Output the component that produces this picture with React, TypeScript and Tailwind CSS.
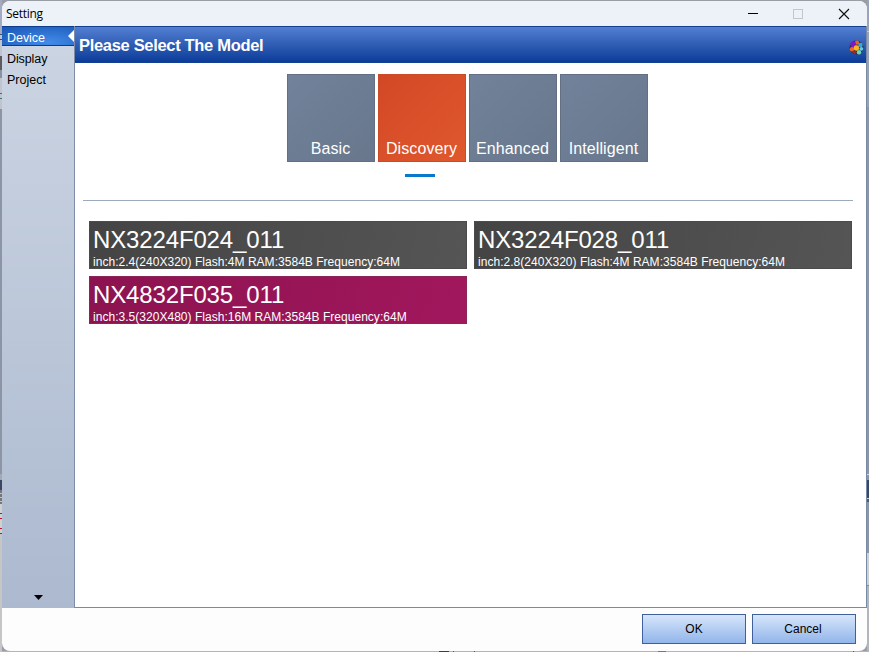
const tabs = ["Basic", "Discovery", "Enhanced", "Intelligent"];

const models = [
  { name: "NX3224F024_011", spec: "inch:2.4(240X320) Flash:4M RAM:3584B Frequency:64M" },
  { name: "NX3224F028_011", spec: "inch:2.8(240X320) Flash:4M RAM:3584B Frequency:64M" },
  { name: "NX4832F035_011", spec: "inch:3.5(320X480) Flash:16M RAM:3584B Frequency:64M" },
];

function LeftEdge() {
  return (
    <div className="flex w-[2px] shrink-0 flex-col bg-[#bfc4cf]">
      <div className="h-[34px] bg-[#a4abc0]" />
      <div className="h-px bg-[#42516a]" />
      <div className="h-[4px]" />
      <div className="h-px bg-[#42516a]" />
      <div className="h-[16px]" />
      <div className="h-[14px] bg-[#5d5a60]" />
      <div className="h-[8px] bg-[#8992a0]" />
      <div className="h-[15px]" />
      <div className="h-px bg-[#3c7776]" />
      <div className="h-[4px]" />
      <div className="h-px bg-[#3c7776]" />
      <div className="h-[10px]" />
      <div className="h-[365px] bg-[#8c95a5]" />
      <div className="h-[6px] bg-[#a2a9b5]" />
      <div className="h-[10px] bg-[#394763]" />
      <div className="h-[14px] bg-[repeating-linear-gradient(#77747c_0px_3px,#c8bfc4_3px_4px)]" />
      <div className="h-[9px] bg-[#d0d0d2]" />
      <div className="h-px bg-[#c01420]" />
      <div className="h-[4px] bg-[#d0d0d2]" />
      <div className="h-px bg-[#c01420]" />
      <div className="h-[9px] bg-[#d0d0d2]" />
      <div className="h-px bg-[#c01420]" />
      <div className="h-[4px] bg-[#d0d0d2]" />
      <div className="h-px bg-[#c01420]" />
      <div className="flex-1 bg-[#c6c6c7]" />
    </div>
  );
}

function RightEdge() {
  return (
    <div className="flex w-[2px] shrink-0 flex-col bg-[#8d96a7]">
      <div className="h-[31px] bg-[#9aa3b8]" />
      <div className="h-px bg-[#c2c8d4]" />
      <div className="h-[75px] bg-[#98a2b5]" />
      <div className="h-[367px]" />
      <div className="h-px bg-[#d4d8df]" />
      <div className="h-[5px]" />
      <div className="h-[18px] bg-[#374766]" />
      <div className="h-px bg-[#c5cbd5]" />
      <div className="h-[3px] bg-[#4d5a72]" />
      <div className="h-[51px]" />
      <div className="h-[32px] bg-[#ced0d4]" />
      <div className="h-px bg-[#858992]" />
      <div className="flex-1 bg-[#b2b5bb]" />
    </div>
  );
}

function TitleBar() {
  return (
    <div className="flex h-[25px] shrink-0 items-center bg-[#edf2f8] pl-[4px]">
      <span className="w-[37px] font-['Open_Sans','Noto_Sans',sans-serif] text-[12px] leading-[16px] tracking-[-0.3px] text-black">
        Setting
      </span>
      <div className="ml-auto flex h-full items-center">
        <div className="flex w-[45px] justify-center">
          <div className="h-px w-[10px] bg-black" />
        </div>
        <div className="mr-px flex w-[45px] justify-center">
          <div className="h-[10px] w-[10px] border border-[#c3c6ca]" />
        </div>
        <div className="flex w-[46px] justify-center">
          <svg width="12" height="12" viewBox="0 0 12 12" stroke="#111" strokeWidth="1.15">
            <path d="M1 1 L11 11 M11 1 L1 11" />
          </svg>
        </div>
      </div>
    </div>
  );
}

function SideBar() {
  return (
    <div className="flex w-[73px] shrink-0 flex-col border-r border-[#7e8da6] bg-linear-to-b from-[#ccd5e3] to-[#acb9cf] text-[12.5px] tracking-[-0.1px] text-black">
      <div className="flex h-[20px] items-center justify-between border-y border-[#0d3c8e] bg-radial-[at_65%_85%] from-[#438be9] to-[#1755b4] pl-[5px] text-white">
        <span className="pt-[3px] leading-[16px] tracking-[-0.05px]">Device</span>
        <svg width="6" height="12" viewBox="0 0 6 12" className="mb-px">
          <path d="M6 0 V12 L0 6 Z" fill="#fff" />
        </svg>
      </div>
      <span className="mt-[5px] pl-[5px] leading-[16px]">Display</span>
      <span className="mt-[5px] pl-[5px] leading-[16px] tracking-[0px]">Project</span>
      <svg width="9" height="5" viewBox="0 0 9 5" className="mt-auto mb-[8px] ml-[32px]">
        <path d="M0 0 H9 L4.5 5 Z" fill="#000" />
      </svg>
    </div>
  );
}

function ColorBall() {
  return (
    <svg width="15" height="17" viewBox="0 0 15 17">
      <circle cx="7.5" cy="8.6" r="7" fill="#26334b" />
      <circle cx="8" cy="3.6" r="2.2" fill="#e8642a" />
      <circle cx="4.2" cy="5.4" r="2.8" fill="#8316cb" />
      <circle cx="11.4" cy="6" r="2.3" fill="#37a5e4" />
      <circle cx="3" cy="10.2" r="2.2" fill="#e66b2e" />
      <circle cx="7.4" cy="9" r="2.7" fill="#ffb61d" />
      <circle cx="12.3" cy="9.8" r="1.9" fill="#67c9ec" />
      <circle cx="5.4" cy="13.3" r="1.8" fill="#a9212c" />
      <circle cx="10" cy="13.3" r="2.2" fill="#75d4ab" />
    </svg>
  );
}

function ModelPanel() {
  return (
    <div className="flex min-w-0 flex-1 flex-col border-r border-b border-[#798aa6] bg-white">
      <div className="flex h-[37px] shrink-0 items-center justify-between border-y border-[#123f91] bg-linear-to-b from-[#527fd1] to-[#0a3c99] pr-[2px] pl-[4px] text-white">
        <h1 className="text-[16.5px] leading-[20px] font-bold tracking-[-0.32px] whitespace-nowrap">
          Please Select The Model
        </h1>
        <div className="pt-[6px]"><ColorBall /></div>
      </div>
      <div className="mt-[11px] ml-[212px] flex gap-[3px]">
        {tabs.map((tab) => (
          <button
            key={tab}
            className={`flex h-[88px] w-[88px] items-end justify-center border pr-px pb-[3px] text-[16px] leading-[18px] tracking-[0.1px] text-white ${
              tab === "Discovery"
                ? "border-[#c94b27] bg-linear-to-br from-[#d24826] to-[#e0582d]"
                : "border-[#637083] bg-linear-to-br from-[#71829a] to-[#68778c]"
            }`}
          >
            {tab}
          </button>
        ))}
      </div>
      <div className="mt-[12px] ml-[330px] h-[3px] w-[30px] bg-[#087acb]" />
      <div className="mr-[13px] ml-[8px] h-[24px] border-b border-[#9babbd]" />
      <div className="mt-[20px] ml-[14px] grid w-[763px] grid-cols-2 gap-[7px]">
        {models.map((model, index) => (
          <button
            key={model.name}
            className={`flex h-[48px] flex-col items-start border pl-[3px] text-left text-white ${
              index === 2
                ? "border-[#8b2459] bg-linear-100 from-[#8c1350] to-[#a2175d]"
                : "border-[#4b4b4b] bg-linear-100 from-[#444444] to-[#555555]"
            }`}
          >
            <span className="mt-[5px] text-[24px] leading-[26px] tracking-[-0.14px]">{model.name}</span>
            <span className="mt-[2px] text-[12px] leading-[15px] tracking-[0.03px] whitespace-nowrap">
              {model.spec}
            </span>
          </button>
        ))}
      </div>
    </div>
  );
}

export default function App() {
  return (
    <div className="flex h-[652px] w-[869px] overflow-hidden bg-[#9fa3aa] font-['Liberation_Sans',Arial,sans-serif]">
      <LeftEdge />
      <div className="flex h-[652px] w-[865px] flex-col bg-[#999da5] pt-px">
        <div className="flex h-[650px] flex-col overflow-hidden rounded-[8px] bg-[#fdfdfd]">
          <TitleBar />
          <div className="flex h-[582px] shrink-0">
            <SideBar />
            <ModelPanel />
          </div>
          <div className="flex h-[42px] items-center justify-end gap-[6px] pr-[11px] text-[12px] text-black">
            <button className="h-[30px] w-[104px] border border-[#40609c] bg-linear-to-b from-[#d6e6fa] to-[#92b5ea]">
              OK
            </button>
            <button className="h-[30px] w-[104px] border border-[#40609c] bg-linear-to-b from-[#d6e6fa] to-[#92b5ea] pr-[2px]">
              Cancel
            </button>
          </div>
        </div>
        <div className="flex h-px bg-[#b7b3b3]">
          <div className="ml-[437px] h-px w-[10px] bg-[#343e50]" />
          <div className="ml-[4px] h-px w-px bg-[#555]" />
          <div className="ml-[20px] h-px w-px bg-[#555]" />
          <div className="ml-[183px] h-px w-[8px] bg-[#777]" />
          <div className="ml-[187px] h-px w-px bg-[#555]" />
        </div>
      </div>
      <RightEdge />
    </div>
  );
}
